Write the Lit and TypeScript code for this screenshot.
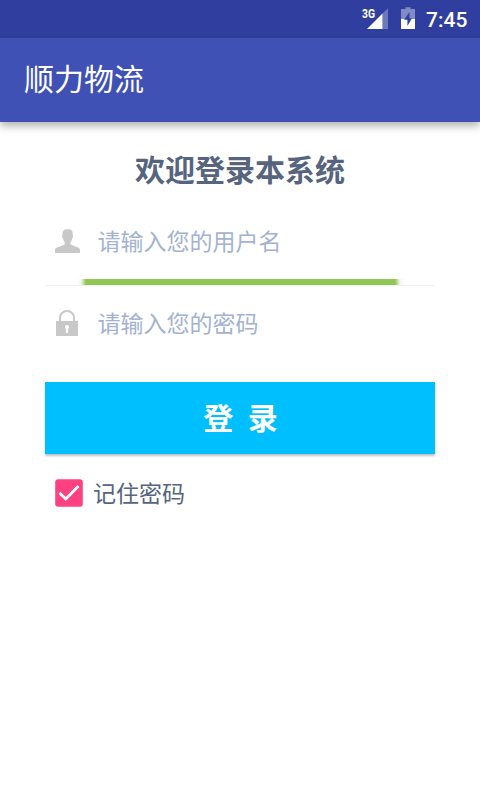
import { LitElement, html, css, svg } from "lit";
import { customElement, state } from "lit/decorators.js";

const userIcon = svg`<path fill="#c8c8c8" d="M12.6 .3C9 .3 7.2 1.6 7.5 5.6C6.9 6.4 7.1 9.2 8.2 10C8.5 11.6 9.2 12.6 9.7 13.3V15.3C8.5 17 1.5 17.6 0 20.3V24H25V20.3C23.5 17.6 16.8 17 15.5 15.3V13.3C16 12.6 16.7 11.6 17 10C18 9.2 18.3 6.4 17.7 5.6C18 1.6 16.2 .3 12.6 .3Z"/>`;
const lockIcon = svg`<path fill="none" stroke="#c8c8c8" stroke-width="2" d="M4 12V7.6A7 6.6 0 0 1 18 7.6V12"/><path fill="#c8c8c8" fill-rule="evenodd" d="M0 11H22V26H0ZM11 15A2.2 2.2 0 0 0 9.9 19V23H12.1V19A2.2 2.2 0 0 0 11 15Z"/>`;

@customElement("status-bar")
class StatusBar extends LitElement {
  static styles = css`
    :host { display: block; height: 38px; background: #303f9f; color: #fff; }
    .bar { display: flex; height: 38px; align-items: center; justify-content: flex-end; padding-right: 12px; box-sizing: border-box; }
    .cell { width: 28px; height: 38px; }
    .battery { width: 14px; height: 38px; margin-left: 12px; }
    .net { font: 700 12px Roboto, sans-serif; fill: #fff; }
    .time { font: 500 21px/38px Roboto, sans-serif; margin-left: 11px; width: 42px; padding-top: 1px; white-space: nowrap; }
  `;
  render() {
    return html`<div class="bar">
      <svg class="cell" viewBox="0 0 28 38">
        <path fill="#fff" fill-opacity=".3" d="M21.5 13.5L27 8.2V29H21.5Z"/>
        <path fill="#fff" d="M21.5 13.5V29H6Z"/>
        <text class="net" x="1" y="17.5" textLength="13" lengthAdjust="spacingAndGlyphs">3G</text>
      </svg>
      <svg class="battery" viewBox="0 0 14 38">
        <path fill="#fff" fill-opacity=".4" d="M4.5 7.3H9.5V9H14V19H0V9H4.5Z"/>
        <path fill="#fff" d="M0 19H14V29H0Z"/>
        <path fill="#303f9f" d="M8.5 12L3 19.8H6.4V26L11 18.2H8.5Z"/>
      </svg>
      <span class="time">7:45</span>
    </div>`;
  }
}

@customElement("login-field")
class LoginField extends LitElement {
  static properties = { hint: {}, icon: {} };
  declare hint: string;
  declare icon: string;
  static styles = css`
    :host { display: flex; align-items: center; font: 400 23px "Noto Sans CJK SC", sans-serif; color: #a3b2cf; }
    .slot { width: 52.5px; display: flex; padding-left: 10px; box-sizing: border-box; }
    .slot.lock { padding-left: 11px; }
    .hint { line-height: 34px; padding-bottom: 2px; white-space: nowrap; }
  `;
  render() {
    return this.icon === "user"
      ? html`<span class="slot"><svg width="25" height="24" viewBox="0 0 25 24">${userIcon}</svg></span><span class="hint">${this.hint}</span>`
      : html`<span class="slot lock"><svg width="22" height="26" viewBox="0 0 22 26">${lockIcon}</svg></span><span class="hint">${this.hint}</span>`;
  }
}

@customElement("app-root")
class AppRoot extends LitElement {
  @state() private remember = true;
  static styles = css`
    :host { display: block; width: 480px; height: 800px; background: #fff; overflow: hidden; font-family: "Noto Sans CJK SC", sans-serif; color: #56647e; }
    .appbar { height: 84px; box-sizing: border-box; padding: 0 24px 7px; display: flex; align-items: center; background: #3f51b5; color: #fff; font-size: 30px; line-height: 44px; box-shadow: 0 4px 8px rgba(0, 0, 0, .3); }
    .content { padding: 24px 45px 0; }
    .welcome { margin: 0; text-align: center; font-size: 30px; line-height: 44px; font-weight: 700; }
    .fields { position: relative; margin-top: 11px; }
    .first { height: 85px; padding-bottom: 4px; border-bottom: 1px solid #efefef; box-sizing: border-box; }
    .second { height: 76px; padding-bottom: 2px; box-sizing: border-box; }
    .accent { position: absolute; left: 32px; right: 31px; top: 78px; height: 6px; background: linear-gradient(90deg, rgba(143, 198, 84, 0), rgba(143, 198, 84, .12) 4px, #8fc654 9px, #8fc654 calc(100% - 9px), rgba(143, 198, 84, .12) calc(100% - 4px), rgba(143, 198, 84, 0)); }
    .login { display: block; width: 390px; height: 72px; margin-top: 20px; padding: 0 0 4px 1px; border: 0; background: #00bfff; color: #fff; font: 700 30px/68px "Noto Sans CJK SC", sans-serif; word-spacing: 7.5px; box-shadow: 0 2px 2px rgba(0, 0, 0, .25); }
    .remember { display: flex; align-items: center; margin-top: 22px; padding-left: 10px; height: 34px; gap: 10px; font-size: 23px; line-height: 34px; }
    .label { padding-bottom: 2px; }
  `;
  render() {
    return html`
      <status-bar></status-bar>
      <header class="appbar">顺力物流</header>
      <main class="content">
        <h1 class="welcome">欢迎登录本系统</h1>
        <div class="fields">
          <login-field class="first" icon="user" hint="请输入您的用户名"></login-field>
          <div class="accent"></div>
          <login-field class="second" icon="lock" hint="请输入您的密码"></login-field>
        </div>
        <button class="login">登 录</button>
        <div class="remember" @click=${() => (this.remember = !this.remember)}>
          <svg width="28" height="28" viewBox="0 0 28 28">
            <rect x=".2" y=".2" width="27.6" height="27.6" rx="3" fill="#ff4081"/>
            ${this.remember ? svg`<path fill="none" stroke="#fff" stroke-width="2.8" d="M4.5 13.8L10.8 20L23.5 7"/>` : ""}
          </svg>
          <span class="label">记住密码</span>
        </div>
      </main>`;
  }
}
